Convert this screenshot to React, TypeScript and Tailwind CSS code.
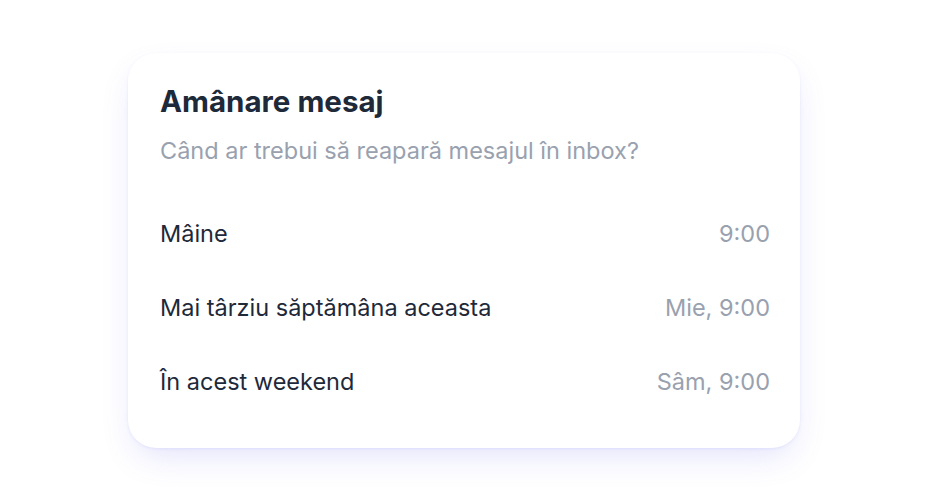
const options = [
  { label: "Mâine", time: "9:00" },
  { label: "Mai târziu săptămâna aceasta", time: "Mie, 9:00" },
  { label: "În acest weekend", time: "Sâm, 9:00" },
]

const App = () => {
  return (
    <div
      className="flex min-h-screen items-center justify-center bg-white"
      style={{ fontFamily: "Inter, 'Noto Sans', sans-serif" }}
    >
      {/* CARD */}
      <div className="w-[672px] rounded-[28px] bg-white pl-8 pr-[30px] pt-[30px] pb-[29px] shadow-[0_1px_3px_rgba(99,102,241,0.1),0_14px_34px_-8px_rgba(99,102,241,0.2)]">
        <h1 className="text-[29.5px] font-bold leading-9 text-gray-800">Amânare mesaj</h1>
        <p className="mt-4 text-[23.5px] leading-8 text-gray-400">Când ar trebui să reapară mesajul în inbox?</p>

        <div className="mt-[30px]">
          {options.map((option) => (
            <div key={option.label} className="flex h-[74px] items-center justify-between text-[23.5px]">
              <span className="text-gray-800">{option.label}</span>
              <span className="text-gray-400">{option.time}</span>
            </div>
          ))}
        </div>
      </div>
    </div>
  )
}

export default App
